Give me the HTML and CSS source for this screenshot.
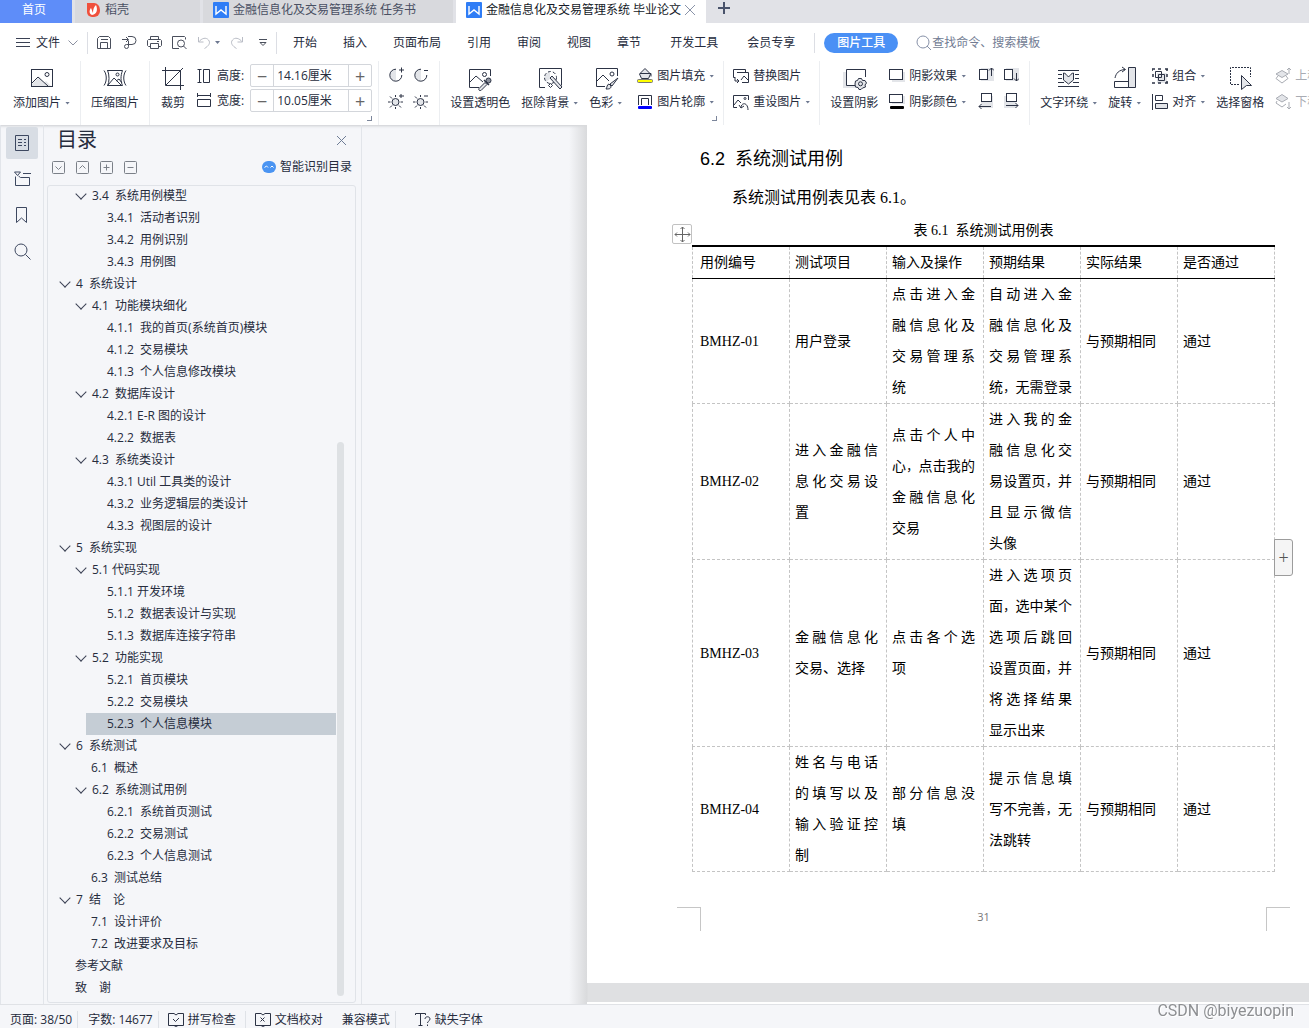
FILE: index.html
```html
<!DOCTYPE html>
<html lang="zh-CN">
<head>
<meta charset="utf-8">
<title>金融信息化及交易管理系统 毕业论文</title>
<link rel="stylesheet" href="styles.css">
</head>
<body>
<div class="app">
  <nav class="tabs" aria-label="文档标签">
    <button class="tab home">首页</button>
    <button class="tab docer"><svg width="13" height="16" viewBox="0 0 13 16"><path d="M0 1h7a6 7 0 0 1 6 7v1a6 6 0 0 1-6 6H5a5 5 0 0 1-5-5z" fill="#f0503c"/><path d="M5 13C1 11 3 7 4 6c1 2 1 3 2 5 0-4 1-6 3-8 2 5 1 9-4 10z" fill="#fff"/></svg>稻壳</button>
    <button class="tab doc"><svg width="16" height="16" viewBox="0 0 16 16"><rect width="16" height="16" rx="1" fill="#2f7df6"/><path d="M3 4v8l5-4 5 4V4" fill="none" stroke="#fff" stroke-width="1.4"/></svg>金融信息化及交易管理系统 任务书</button>
    <button class="tab doc active"><svg width="16" height="16" viewBox="0 0 16 16"><rect width="16" height="16" rx="1" fill="#2f7df6"/><path d="M3 4v8l5-4 5 4V4" fill="none" stroke="#fff" stroke-width="1.4"/></svg>金融信息化及交易管理系统 毕业论文<svg class="tab-close" width="12" height="12" viewBox="0 0 12 12"><path d="M1 1l10 10M11 1L1 11" fill="none"/></svg></button>
    <button class="tab-add" aria-label="新建"><svg width="12" height="12" viewBox="0 0 12 12"><path d="M6 0v12M0 6h12" stroke="#49536b" stroke-width="2"/></svg></button>
  </nav>

  <header class="menubar">
    <button class="file"><svg width="14" height="12" viewBox="0 0 14 12"><path d="M0 1.500h14M0 5.500h14M0 9.500h14" stroke="#3a4154"/></svg>文件<svg class="file-arrow" width="10" height="6" viewBox="0 0 10 6"><path d="M.5.5L5 5 9.500.5" stroke="#8b90a0" fill="none"/></svg></button>
    <div class="quick">
      <button aria-label="保存"><svg width="15" height="15" viewBox="0 0 15 15"><path d="M.500 13.500v-10l2-2h9l2 2v10zM3.500 13.500v-6h7v6M4 4.500h7"/></svg></button>
      <button aria-label="导出"><svg width="15" height="15" viewBox="0 0 15 15"><path d="M0 4.500h6M4 2l2.500 2.500L4 7M6 1.500h4a3.500 3.500 0 0 1 0 8H4.500a2 2 0 1 0 2 2v-6"/></svg></button>
      <button aria-label="打印"><svg width="15" height="15" viewBox="0 0 15 15"><path d="M3.500 4.500v-3h8v3M3.500 11.500h-2l-1-1v-5l1-1h12l1 1v5l-1 1h-2M3.500 8.500h8v5h-8zM10 6.500h2"/></svg></button>
      <button aria-label="打印预览"><svg width="15" height="15" viewBox="0 0 15 15"><path d="M7 13.500H.500v-12h12l1 1v2"/><circle cx="9" cy="8.500" r="3.500"/><path d="M11.500 11l3 3"/></svg></button>
      <button class="dim undo" aria-label="撤销"><svg width="14" height="14" viewBox="0 0 14 14"><path d="M1.500 1v5h5M1.500 6C5 2 9 1 11.500 4s0 6-4 8.500"/></svg><i class="caret"></i></button>
      <button class="dim" aria-label="恢复"><svg width="14" height="14" viewBox="0 0 14 14"><path d="M12.500 1v5h-5M12.500 6C9 2 5 1 2.500 4s0 6 4 8.500"/></svg></button>
      <button class="more" aria-label="更多"><svg width="10" height="8" viewBox="0 0 10 8"><path d="M1 .5h8M2 3.500h6L5 6.500z"/></svg></button>
    </div>
    <nav class="menu">
      <button>开始</button><button>插入</button><button>页面布局</button><button>引用</button><button>审阅</button><button>视图</button><button>章节</button>
    </nav>
    <nav class="menu extra"><button>开发工具</button><button>会员专享</button></nav>
    <div class="context"><button>图片工具</button></div>
    <label class="search"><svg width="16" height="16" viewBox="0 0 16 16"><circle cx="7" cy="7" r="6"/><path d="M11 11l4 4"/></svg><input type="text" placeholder="查找命令、搜索模板"></label>
  </header>

  <section class="ribbon" aria-label="图片工具">
    <div class="group first">
      <button class="big"><svg width="26" height="26" viewBox="0 0 26 26"><path class="soft" d="M3 19l7-7 5 6 2-2 5 5H3z"/><rect x="2.500" y="4.500" width="21" height="17"/><path d="M3 18l6-6 10 9"/><circle cx="18" cy="9.500" r="2"/></svg><span>添加图片<i class="caret"></i></span></button>
    </div>
    <div class="group">
      <button class="big"><svg width="26" height="26" viewBox="0 0 26 26"><path d="M5.500 5c2 5 2 12 0 16M5.500 5.500h15c-2 5-2 11 0 15h-15M2 5.500c3 4 3 11 0 15M24 5.500c-3 4-3 11 0 15M6 20l6-7 8 8M14 16l3-2 3 4"/><circle cx="15.500" cy="9.500" r="1.500"/></svg><span>压缩图片</span></button>
    </div>
    <div class="group size">
      <button class="big"><svg width="26" height="26" viewBox="0 0 26 26"><path d="M5.500 2v18.500H24M2 5.500h18.500V25M23 3L6 20"/></svg><span>裁剪</span></button>
      <div class="stack">
        <div class="field"><svg width="14" height="16" viewBox="0 0 14 16"><path d="M.500 1.500h4M2.500 1.500v13M.500 14.500h4M6.500 1.500h6v13h-6z"/></svg><label for="h">高度:</label><div class="spin"><button aria-label="减小高度"><b>−</b></button><input id="h" type="text" value="14.16厘米"><button aria-label="增大高度"><b>+</b></button></div></div>
        <div class="field"><svg width="14" height="16" viewBox="0 0 14 16"><path d="M.500 4V0M.500 2.500h13M13.500 0v4M.500 6.500h13v7H.500z"/></svg><label for="w">宽度:</label><div class="spin"><button aria-label="减小宽度"><b>−</b></button><input id="w" type="text" value="10.05厘米"><button aria-label="增大宽度"><b>+</b></button></div></div>
      </div>
      <i class="launcher"></i>
    </div>
    <div class="group tone">
      <div class="grid">
        <button aria-label="增加对比度"><svg width="16" height="16" viewBox="0 0 16 16"><path class="soft" d="M8 2v12a6 6 0 0 1 0-12"/><path d="M8 2.200A6 6 0 1 0 13.800 8M13.500.500v5M11 3h5"/></svg></button>
        <button aria-label="降低对比度"><svg width="16" height="16" viewBox="0 0 16 16"><path class="soft" d="M8 2v12a6 6 0 0 1 0-12"/><path d="M8 2.200A6 6 0 1 0 13.800 8M11 3.500h4"/></svg></button>
        <button aria-label="增加亮度"><svg width="16" height="16" viewBox="0 0 16 16"><circle class="soft line" cx="7.500" cy="9" r="3.500"/><path d="M7.500 2v2M7.500 14v2M0 9h2.500M12.500 9H15M2 3.500L4 5.500M2 14.500l2-2M13 14.500l-2-2M13 1v4M11 3h5"/></svg></button>
        <button aria-label="降低亮度"><svg width="16" height="16" viewBox="0 0 16 16"><circle class="soft line" cx="7.500" cy="9" r="3.500"/><path d="M7.500 2v2M7.500 14v2M0 9h2.500M12.500 9H15M2 3.500L4 5.500M2 14.500l2-2M13 14.500l-2-2M11 3h4"/></svg></button>
      </div>
    </div>
    <div class="group art">
      <button class="big"><svg width="26" height="26" viewBox="0 0 26 26"><path d="M12 22.500H2.500v-18h21V11M3 17l6-6 7 6"/><circle cx="17.500" cy="9.500" r="2"/><path class="soft line" d="M12 23.500l6-6 2 2-6 6c-1 1-3-1-2-2z"/><circle cx="21.500" cy="15.500" r="2.500" fill="#8c919d"/><path d="M17 15l5 5" stroke-width="1.500"/></svg><span>设置透明色</span></button>
      <button class="big"><svg width="26" height="26" viewBox="0 0 26 26"><path d="M8 22.500H2.500v-19h22v17"/><path class="soft" d="M13 7a6 6 0 0 0-4 10l4-3z"/><circle cx="13.500" cy="12.500" r="6" stroke-dasharray="3 2"/><path class="soft line" d="M13 13l2-2 10 11-2 2z"/><path d="M13.500 18.500l2 2-2 2-2-2z"/></svg><span>抠除背景<i class="caret"></i></span></button>
      <button class="big"><svg width="26" height="26" viewBox="0 0 26 26"><path d="M12 21.500H3.500v-18h21V11M4 16l6-6 6 6"/><circle cx="19" cy="9" r="2"/><path class="soft line" d="M25 13l-6 8-2-2z"/><path class="soft line" d="M16 19l2 2c0 3-2 3-5 3 1-1 1-5 3-5z"/></svg><span>色彩<i class="caret"></i></span></button>
      <div class="stack">
        <button><svg width="16" height="16" viewBox="0 0 16 16"><path class="soft line" d="M2.500 6L8 .5 13.500 6l-2 4.500h-7z"/><path d="M3 5.500h11v3"/><rect x=".5" y="11.500" width="15" height="3" rx="1" fill="#ff0" stroke="#777"/></svg>图片填充<i class="caret"></i></button>
        <button><svg width="16" height="16" viewBox="0 0 16 16"><path d="M1.500 11V1.500h13V11M4.500 11V4.500h7V11"/><rect x="1" y="12" width="14" height="3" rx="1" fill="#00f" stroke="none"/></svg>图片轮廓<i class="caret"></i></button>
      </div>
      <i class="launcher"></i>
    </div>
    <div class="group narrow">
      <div class="stack">
        <button><svg width="16" height="16" viewBox="0 0 16 16"><path d="M2 9.500H.500v-8h12V4M4 4.500h11.500v10H9M8 12l3-4 4 4M2 9v4h4M4 11l2 2-2 2"/></svg>替换图片</button>
        <button><svg width="16" height="16" viewBox="0 0 16 16"><path d="M4 13.500H.500v-12h15V6M1 11l4-5 3 3"/><circle cx="12" cy="4.500" r="1"/><path d="M6 11l2 3 3-2M8 14c0-6 7-6 7 2"/></svg>重设图片<i class="caret"></i></button>
      </div>
    </div>
    <div class="group">
      <button class="big"><svg width="26" height="26" viewBox="0 0 26 26"><path class="soft" d="M2 7h4v14h9v2H2z"/><path d="M14 20.500H5.500v-16h19V12"/><path class="soft line" d="M17.500 13.500h3l1 2h2.500l1.500 2.500-1.500 2 .5 2-3 1-1.500 1.500h-2l-1-2-2.500-.5-.5-3 .5-3 2-.5z"/><circle cx="19.500" cy="18.800" r="2"/></svg><span>设置阴影</span></button>
      <div class="stack">
        <button><svg width="16" height="16" viewBox="0 0 16 16"><path class="soft" d="M3 4h13v10H3z"/><rect x=".5" y="1.500" width="13" height="10" fill="#fff"/></svg>阴影效果<i class="caret"></i></button>
        <button><svg width="16" height="16" viewBox="0 0 16 16"><path class="soft" d="M3 2h13v8H3z"/><rect x=".5" y=".5" width="13" height="8" fill="#fff"/><rect x="1" y="12" width="14" height="3" rx="1" fill="#000" stroke="none"/></svg>阴影颜色<i class="caret"></i></button>
      </div>
      <div class="grid shadow">
        <button aria-label="上移阴影"><svg width="16" height="16" viewBox="0 0 16 16"><path class="soft" d="M3 1h13v13H3z"/><rect x="1.500" y="2.500" width="8" height="10" fill="#fff"/><path d="M13.500 9V1M11 3.500l2.500-2.500L16 3.500"/></svg></button>
        <button aria-label="下移阴影"><svg width="16" height="16" viewBox="0 0 16 16"><path class="soft" d="M3 1h13v13H3z"/><rect x="1.500" y="2.500" width="8" height="10" fill="#fff"/><path d="M13.500 6v8M11 11.500l2.500 2.500 2.500-2.500"/></svg></button>
        <button aria-label="左移阴影"><svg width="16" height="16" viewBox="0 0 16 16"><path class="soft" d="M3 3h12v12H3z"/><rect x="3.500" y=".5" width="10" height="8" fill="#fff"/><path d="M13 13.500H1M3.500 11L1 13.500 3.500 16"/></svg></button>
        <button aria-label="右移阴影"><svg width="16" height="16" viewBox="0 0 16 16"><path class="soft" d="M1 3h12v12H1z"/><rect x="3.500" y=".5" width="10" height="8" fill="#fff"/><path d="M3 12.500h12M12.500 10l2.500 2.500-2.500 2.500"/></svg></button>
      </div>
    </div>
    <div class="group last">
      <button class="big"><svg width="26" height="26" viewBox="0 0 26 26"><path d="M2 5.500h21M2 9.500h4M19 9.500h4M2 13.500h4M19 13.500h4M2 17.500h6M17 17.500h6M2 21.500h21"/><path class="soft line" d="M7.500 8c2 0 3 2 5 4 2-2 3-4 5-4v7l-5 4-5-4z"/></svg><span>文字环绕<i class="caret"></i></span></button>
      <button class="big"><svg width="26" height="26" viewBox="0 0 26 26"><path class="soft line" d="M16.500 2.500h7v20h-7z"/><path d="M2.500 16.500h14v6h-14zM3 13c1-5 4-8 10-8.500M10 2l3.500 2.500L10 7"/></svg><span>旋转<i class="caret"></i></span></button>
      <div class="stack">
        <button><svg width="16" height="16" viewBox="0 0 16 16"><path class="soft" d="M5 5h10v10H5z"/><path d="M3.500 3.500h6v6h-6zM6.500 6.500h6v6h-6z"/><path d="M0 1h3M0 1v2M13 1h3M15 1v2M0 15h3M15 13v2M13 15h3M6 1h3M1 6v3M15 6v3M6 15h3" stroke-width="1.500"/></svg>组合<i class="caret"></i></button>
        <button><svg width="16" height="16" viewBox="0 0 16 16"><path d="M.500 0v16M3.500 1.500h7v5h-7z"/><path class="soft line" d="M3.500 9.500h12v5h-12z"/></svg>对齐<i class="caret"></i></button>
      </div>
      <button class="big"><svg width="26" height="26" viewBox="0 0 26 26"><path d="M12 19.500H3.500v-17h20V12" stroke-dasharray="2 1"/><path class="soft line" d="M14.500 10.500l10 10h-5l-5 4z"/></svg><span>选择窗格</span></button>
      <div class="stack faded">
        <button><svg width="16" height="16" viewBox="0 0 16 16"><path class="soft line" d="M7 2.500L13 6 7 9.500 1 6z"/><path d="M3 8l-2 2.500L7 15l6-4.500L11 8M14 6V0M12 2l2-2 2 2"/></svg>上移一层</button>
        <button><svg width="16" height="16" viewBox="0 0 16 16"><path class="soft line" d="M7 .5L13 4.500 7 8 1 4.500z"/><path d="M2 7L1 9l6 4 4-3M14 8v7M12 13l2 2 2-2"/></svg>下移一层</button>
      </div>
    </div>
  </section>

  <main class="workspace">
    <nav class="rail" aria-label="导航">
      <button class="on" aria-label="目录"><svg width="16" height="18" viewBox="0 0 16 18"><path d="M1.500 1.500h13v15h-13zM4 5.500h4M10 5.500h2M4 8.500h4M10 8.500h2M4 11.500h4M10 11.500h2"/></svg></button>
      <button aria-label="章节"><svg width="17" height="16" viewBox="0 0 17 16"><path d="M.500 1h6L3.500 4.500zM9 2.500h8M1.500 5.500v9h14v-8h-9l-2-1.500"/></svg></button>
      <button aria-label="书签"><svg width="12" height="18" viewBox="0 0 12 18"><path d="M.500 1.500h10v15L5.500 12l-5 4.500z"/></svg></button>
      <button aria-label="查找"><svg width="17" height="17" viewBox="0 0 17 17"><circle cx="7" cy="7" r="6"/><path d="M11.500 11.500l5 5"/></svg></button>
    </nav>

    <aside class="outline">
      <div class="outline-head"><h2>目录</h2><button aria-label="关闭"><svg width="11" height="11" viewBox="0 0 11 11"><path d="M1 1l9 9M10 1l-9 9"/></svg></button></div>
      <div class="outline-tools">
        <button aria-label="展开"><svg width="13" height="13" viewBox="0 0 13 13"><rect x=".5" y=".5" width="12" height="12" rx="1"/><path d="M3.500 5.500l3 3 3-3"/></svg></button>
        <button aria-label="收起"><svg width="13" height="13" viewBox="0 0 13 13"><rect x=".5" y=".5" width="12" height="12" rx="1"/><path d="M3.500 7.500l3-3 3 3"/></svg></button>
        <button aria-label="增加"><svg width="13" height="13" viewBox="0 0 13 13"><rect x=".5" y=".5" width="12" height="12" rx="1"/><path d="M3.500 6.500h6M6.500 3.500v6"/></svg></button>
        <button aria-label="减少"><svg width="13" height="13" viewBox="0 0 13 13"><rect x=".5" y=".5" width="12" height="12" rx="1"/><path d="M3.500 6.500h6"/></svg></button>
        <button class="smart"><svg width="14" height="12" viewBox="0 0 14 12"><rect width="14" height="12" rx="6" fill="#4a94f2" stroke="none"/><path d="M2.500 6.500l2-1.500L6 6.500M8.500 6.500L10 5l1.500 1.500" stroke="#fff"/></svg>智能识别目录</button>
      </div>
      <div class="tree">
        <ul>
          <li class="l2 open">3.4  系统用例模型</li>
          <li class="l3">3.4.1  活动者识别</li>
          <li class="l3">3.4.2  用例识别</li>
          <li class="l3">3.4.3  用例图</li>
          <li class="l1 open">4  系统设计</li>
          <li class="l2 open">4.1  功能模块细化</li>
          <li class="l3">4.1.1  我的首页(系统首页)模块</li>
          <li class="l3">4.1.2  交易模块</li>
          <li class="l3">4.1.3  个人信息修改模块</li>
          <li class="l2 open">4.2  数据库设计</li>
          <li class="l3">4.2.1 E-R 图的设计</li>
          <li class="l3">4.2.2  数据表</li>
          <li class="l2 open">4.3  系统类设计</li>
          <li class="l3">4.3.1 Util 工具类的设计</li>
          <li class="l3">4.3.2  业务逻辑层的类设计</li>
          <li class="l3">4.3.3  视图层的设计</li>
          <li class="l1 open">5  系统实现</li>
          <li class="l2 open">5.1 代码实现</li>
          <li class="l3">5.1.1 开发环境</li>
          <li class="l3">5.1.2  数据表设计与实现</li>
          <li class="l3">5.1.3  数据库连接字符串</li>
          <li class="l2 open">5.2  功能实现</li>
          <li class="l3">5.2.1  首页模块</li>
          <li class="l3">5.2.2  交易模块</li>
          <li class="l3 current">5.2.3  个人信息模块</li>
          <li class="l1 open">6  系统测试</li>
          <li class="l2">6.1  概述</li>
          <li class="l2 open">6.2  系统测试用例</li>
          <li class="l3">6.2.1  系统首页测试</li>
          <li class="l3">6.2.2  交易测试</li>
          <li class="l3">6.2.3  个人信息测试</li>
          <li class="l2">6.3  测试总结</li>
          <li class="l1 open">7  结　论</li>
          <li class="l2">7.1  设计评价</li>
          <li class="l2">7.2  改进要求及目标</li>
          <li class="l1">参考文献</li>
          <li class="l1">致　谢</li>
        </ul>
        <i class="thumb"></i>
      </div>
    </aside>

    <div class="canvas">
      <div class="sheets">
        <article class="paper">
          <div class="text">
            <h1>6.2  系统测试用例</h1>
            <p>系统测试用例表见表 6.1。</p>
            <div class="table-box">
              <button class="move" aria-label="移动表格"><svg width="17" height="17" viewBox="0 0 17 17"><path d="M8.500 1v15M1 8.500h15M6.500 3l2-2 2 2M6.500 14l2 2 2-2M3 6.500l-2 2 2 2M14 6.500l2 2-2 2"/></svg></button>
              <table>
                <caption>表 6.1  系统测试用例表</caption>
                <thead><tr><th>用例编号</th><th>测试项目</th><th>输入及操作</th><th>预期结果</th><th>实际结果</th><th>是否通过</th></tr></thead>
                <tbody>
                  <tr><td>BMHZ-01</td><td>用户登录</td><td>点击进入金融信息化及交易管理系统</td><td class="fill">自动进入金融信息化及交易管理系统<span class="comma">，</span>无需登录</td><td>与预期相同</td><td>通过</td></tr>
                  <tr><td>BMHZ-02</td><td>进入金融信息化交易设置</td><td>点击个人中心<span class="comma">，</span>点击我的金融信息化交易</td><td>进入我的金融信息化交易设置页<span class="comma">，</span>并且显示微信头像</td><td>与预期相同</td><td>通过</td></tr>
                  <tr><td>BMHZ-03</td><td>金融信息化交易、选择</td><td>点击各个选项</td><td>进入选项页面<span class="comma">，</span>选中某个选项后跳回设置页面<span class="comma">，</span>并将选择结果显示出来</td><td>与预期相同</td><td>通过</td></tr>
                  <tr><td>BMHZ-04</td><td>姓名与电话的填写以及输入验证控制</td><td>部分信息没填</td><td>提示信息填写不完善<span class="comma">，</span>无法跳转</td><td>与预期相同</td><td>通过</td></tr>
                </tbody>
              </table>
              <button class="add-col" aria-label="添加列">+</button>
            </div>
            <footer><i class="mark left"></i><span>31</span><i class="mark right"></i></footer>
          </div>
        </article>
        <div class="paper next"></div>
      </div>
    </div>
  </main>

  <footer class="status">
    <span class="cell">页面: 38/50</span>
    <span class="cell">字数: 14677</span>
    <button class="cell"><svg width="16" height="15" viewBox="0 0 16 15"><path d="M6 1.500H.500v12h15v-12H10M6 1.500l2 1.500 2-1.500M5 7l2.500 2.500L11 6M6 13.500l2 1 2-1"/></svg>拼写检查</button>
    <button class="cell plain"><svg width="16" height="15" viewBox="0 0 16 15"><path d="M6 1.500H.500v12h15v-12H10M6 1.500l2 1.500 2-1.500M5.500 5.500l4 4M9.500 5.500l-4 4M6 13.500l2 1 2-1"/></svg>文档校对</button>
    <span class="cell">兼容模式</span>
    <button class="cell plain fonts"><svg width="16" height="15" viewBox="0 0 16 15"><path d="M.500 3V1.500h10V3M5.500 1.500v12M3.500 13.500h4M10 7c0-3 5-3 5 0 0 2-2.500 2-2.500 4M12.500 12.500v1.500"/></svg>缺失字体</button>
  </footer>
  <div class="watermark">CSDN @biyezuopin</div>
</div>
</body>
</html>
```
FILE: styles.css
```css
* { box-sizing: border-box; }
body {
  margin: 0;
  font: 12px/18px "Open Sans", "Noto Sans CJK SC", sans-serif;
  color: #262c3d;
  background: #f5f6f9;
}
button, input { font: inherit; color: inherit; border: 0; padding: 0; margin: 0; background: none; }
svg { fill: none; stroke: #2c3345; flex: none; display: block; }
button { white-space: nowrap; }
i { display: block; }
.caret { width: 5px; height: 3px; flex: none; background: #6d7890; clip-path: polygon(0 0, 100% 0, 50% 100%); }

.app { height: 100vh; overflow: hidden; display: flex; flex-direction: column; }

/* document tabs */
.tabs { display: flex; flex: none; height: 23px; background: #e1e2e7; gap: 3px; }
.tab { display: flex; align-items: center; background: #d8d9dd; color: #4a5063; height: 23px; padding: 0 0 4px; gap: 4px; }
.tab svg { stroke: none; }
.tab .tab-close { stroke: #8a93a8; margin-left: -1px; }
.home { width: 72px; justify-content: center; padding-right: 4px; background: #5e8df9; color: #fff; }
.docer { width: 125px; padding-left: 12px; gap: 5px; }
.doc { width: 250px; padding-left: 10px; }
.doc.active { background: #fff; color: #151a28; }
.tab-add { padding: 0 9px 7px; }

/* menu row */
.menubar { display: flex; flex: none; align-items: center; height: 38px; background: #fff; padding: 1px 0 0 16px; }
.file { display: flex; align-items: center; gap: 6px; }
.file-arrow { margin-left: 2px; }
.quick { display: flex; align-items: center; gap: 10px; margin-left: 9px; padding: 0 8px 0 9px; border: 1px solid #dcdee4; border-width: 0 1px; height: 22px; }
.quick svg { stroke: #4a4f5c; }
.quick .dim svg { stroke: #b9bcc5; }
.undo { display: flex; align-items: center; gap: 4px; }
.quick .more { margin-left: 4px; }
.menu { display: flex; gap: 26px; margin-left: 16px; }
.menu.extra { gap: 29px; margin-left: 29px; }
.context { margin-left: 19px; padding-left: 9px; border-left: 1px solid #dcdee4; }
.context button { display: block; background: #4a90f5; color: #fff; height: 20px; width: 74px; border-radius: 10px; font-weight: 500; }
.search { display: flex; align-items: center; margin-left: 18px; color: #727c93; }
.search svg { stroke: #8791a8; }
.search input { width: 140px; outline: 0; }
.search input::placeholder { color: #727c93; opacity: 1; }

/* ribbon */
.ribbon { display: flex; flex: none; height: 64px; background: #fff; overflow: hidden; position: relative; z-index: 2; }
.group { display: flex; flex: none; position: relative; gap: 11px; padding: 0 10px; border-right: 1px solid #eceef1; }
.group.first { padding-left: 13px; }
.group.size { padding-right: 6px; }
.group.tone { padding: 0 10px 0 9px; }
.group.art { padding-right: 9px; }
.group.art .stack { margin-left: 4px; }
.group.narrow { padding: 0 9px; }
.group.last { border: 0; }
.big { display: flex; flex-direction: column; align-items: center; padding-top: 4px; align-self: flex-start; }
.big span { display: flex; align-items: center; gap: 4px; line-height: 24px; }
.stack { display: flex; flex-direction: column; padding-top: 2px; }
.stack > button, .field { display: flex; align-items: center; gap: 4px; height: 26px; }
.group .field { height: 25px; }
.field label { margin: 0 2px; }
.spin { display: flex; width: 122px; height: 23px; border: 1px solid #d3d6db; border-radius: 2px; }
.spin input { flex: 1; min-width: 0; padding-left: 3px; outline: 0; }
.spin button { width: 23px; border-right: 1px solid #d3d6db; color: #666; font-size: 18px; line-height: 18px; }
.spin b { font-weight: 400; }
.spin button:last-child { border-right: 0; border-left: 1px solid #d3d6db; }
.grid { display: grid; grid-template-columns: 16px 16px; grid-auto-rows: 26px; gap: 0 9px; padding-top: 1px; }
.grid.shadow { margin-left: 1px; }
.grid button { display: grid; place-items: center; }
.soft { fill: #e3e5e9; stroke: none; }
.soft.line { stroke: #2c3345; }
.launcher { position: absolute; right: 6px; bottom: 4px; width: 5px; height: 5px; border: solid #7c869b; border-width: 0 1px 1px 0; }
.faded { color: #a9acb3; }
.faded svg, .faded .soft.line { stroke: #a9acb3; }

/* left side */
.workspace { display: flex; flex: 1; min-height: 0; box-shadow: inset 0 3px 3px -2px #c9cbd0; }
.rail { width: 44px; flex: none; border-right: 1px solid #e2e5ea; border-left: 1px solid #e2e5ea; padding: 2px 5px; display: flex; flex-direction: column; gap: 4px; }
.rail button { width: 32px; height: 32px; display: grid; place-items: center; border-radius: 2px; }
.rail svg { stroke: #3d4860; }
.rail .on { background: #d8dde4; }
.outline { width: 318px; flex: none; border-right: 1px solid #e2e5ea; padding: 0 5px 1px 3px; display: flex; flex-direction: column; }
.outline-head { display: flex; justify-content: space-between; align-items: center; height: 30px; padding: 0 9px 0 10px; }
.outline h2 { margin: 0; font-size: 20px; line-height: 30px; font-weight: 400; }
.outline-head svg { stroke: #6f7d96; }
.outline-tools { display: flex; align-items: center; gap: 11px; padding: 0 4px 6px 5px; height: 30px; }
.outline-tools svg { stroke: #7b8088; }
.smart { display: flex; align-items: center; gap: 4px; margin-left: auto; }
.tree { position: relative; flex: 1; min-height: 0; overflow: hidden; border: 1px solid #e0e3e8; border-radius: 3px; }
.tree ul { list-style: none; margin: -1px 19px 0 6px; padding: 0; }
.tree li { display: flex; align-items: center; white-space: pre; height: 22px; padding-left: 21px; }
.tree .l2 { margin-left: 16px; }
.tree .l3 { margin-left: 32px; }
.tree .current { background: #c5cdd5; }
.tree .open { padding-left: 8px; }
.tree .open::before { content: ""; width: 7px; height: 7px; border: solid #3b4255; border-width: 0 1px 1px 0; transform: translateY(-2px) rotate(45deg); margin: 0 7px 0 -1px; }
.thumb { position: absolute; right: 11px; top: 256px; bottom: 6px; width: 7px; border-radius: 4px; background: #dee1e4; }

/* document */
.canvas { flex: 1; min-width: 0; overflow: hidden; padding-left: 207px; }
.sheets { padding-left: 18px; background: linear-gradient(90deg, #f5f6f900, #d9dadc 18px, #dfe0e2 19px); }
.paper { background: #fff; padding: 14px 0 52px 90px; margin-bottom: 19px; color: #000; }
.paper.next { padding: 0; margin: 0; height: 200px; }
.text { width: 613px; font-family: "Liberation Serif", "Noto Sans CJK SC", serif; }
.text h1 { font: 400 18px/40px "Liberation Sans", "Noto Sans CJK SC", sans-serif; margin: 0 23px; white-space: pre; }
.text p { font-size: 16px; line-height: 38px; margin: 0 23px; text-indent: 32px; }
.table-box { position: relative; margin: 0 15px; }
table { width: 100%; table-layout: fixed; border-collapse: collapse; font-size: 14px; line-height: 31px; }
caption { line-height: 28px; white-space: pre; }
th, td { font-weight: inherit; text-align: justify; padding: 0 8px 0 5px; border: 1px dashed #c4c4c4; }
th:first-child, td:first-child { padding: 0 6px 0 7px; }
th { border-top: 2px solid #000; border-bottom: 1px solid #000; white-space: nowrap; }
.comma { font-size: 12px; line-height: 1; }
.fill { text-align-last: justify; }
.move { position: absolute; left: -20px; top: 7px; width: 20px; height: 20px; border: 1px solid #c2c2c2; border-radius: 2px; background: #fff; display: grid; place-items: center; }
.move svg { stroke: #666; }
.add-col { position: absolute; right: -18px; top: 322px; width: 19px; height: 37px; border: 1px solid #9c9c9c; border-radius: 0 3px 3px 0; background: #f5f5f5; font-size: 18px; color: #555; }
.text footer { display: flex; justify-content: space-between; margin-top: 35px; font: 11px/20px "Open Sans", sans-serif; color: #777; }
.mark { width: 24px; height: 24px; border: solid #c6c6c6; border-width: 1px 1px 0 0; }
.mark.right { border-width: 1px 0 0 1px; }

/* status bar */
.status { display: flex; flex: none; height: 24px; overflow: hidden; border-top: 1px solid #e0e2e6; padding-top: 6px; background: #f5f6f9; }
.cell { display: flex; flex: none; align-items: center; gap: 4px; height: 18px; padding: 0 5px 0 10px; border-right: 1px solid #dfe2e7; }
.cell svg { margin-top: -2px; }
button.cell { padding: 0 9px; }
.cell.plain { border: 0; }
.cell.fonts { padding-left: 19px; }
.watermark { position: fixed; right: 15px; bottom: 7px; font: 16px/20px Roboto, sans-serif; color: #8d8f92; text-shadow: 1px 1px 0 #fff; }
```
